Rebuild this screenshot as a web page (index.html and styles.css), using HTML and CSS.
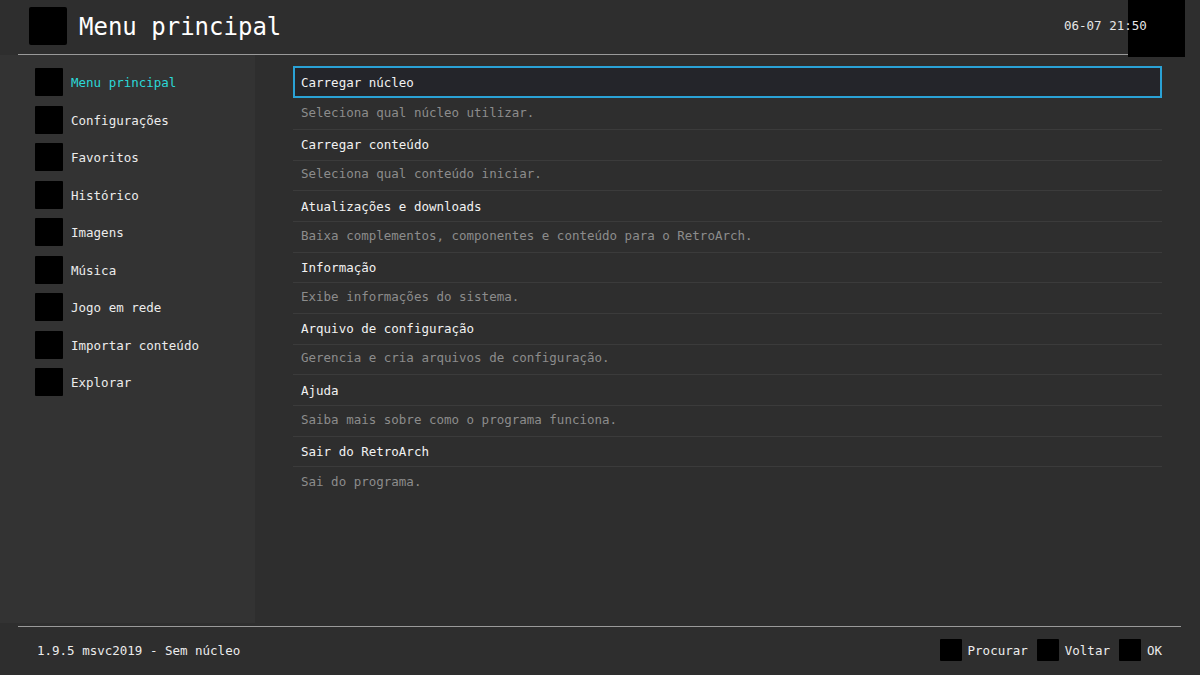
FILE: index.html
```html
<!DOCTYPE html>
<html lang="pt">
<head>
    <meta charset="UTF-8">
    <meta name="viewport" content="width=device-width, initial-scale=1.0">
    <title>Menu principal</title>
    <link rel="stylesheet" href="styles.css">
</head>
<body>
    <div class="screen">
        <header class="header">
            <div class="header-icon"></div>
            <h1 class="title">Menu principal</h1>
            <div class="clock">06-07 21:50</div>
            <div class="status-box"></div>
        </header>

        <div class="body">
            <nav class="sidebar">
                <div class="tab active"><span class="tab-icon"></span>Menu principal</div>
                <div class="tab"><span class="tab-icon"></span>Configurações</div>
                <div class="tab"><span class="tab-icon"></span>Favoritos</div>
                <div class="tab"><span class="tab-icon"></span>Histórico</div>
                <div class="tab"><span class="tab-icon"></span>Imagens</div>
                <div class="tab"><span class="tab-icon"></span>Música</div>
                <div class="tab"><span class="tab-icon"></span>Jogo em rede</div>
                <div class="tab"><span class="tab-icon"></span>Importar conteúdo</div>
                <div class="tab"><span class="tab-icon"></span>Explorar</div>
            </nav>

            <main class="entries">
                <div class="entry selected">
                    <div class="entry-label">Carregar núcleo</div>
                    <div class="entry-desc">Seleciona qual núcleo utilizar.</div>
                </div>
                <div class="entry">
                    <div class="entry-label">Carregar conteúdo</div>
                    <div class="entry-desc">Seleciona qual conteúdo iniciar.</div>
                </div>
                <div class="entry">
                    <div class="entry-label">Atualizações e downloads</div>
                    <div class="entry-desc">Baixa complementos, componentes e conteúdo para o RetroArch.</div>
                </div>
                <div class="entry">
                    <div class="entry-label">Informação</div>
                    <div class="entry-desc">Exibe informações do sistema.</div>
                </div>
                <div class="entry">
                    <div class="entry-label">Arquivo de configuração</div>
                    <div class="entry-desc">Gerencia e cria arquivos de configuração.</div>
                </div>
                <div class="entry">
                    <div class="entry-label">Ajuda</div>
                    <div class="entry-desc">Saiba mais sobre como o programa funciona.</div>
                </div>
                <div class="entry">
                    <div class="entry-label">Sair do RetroArch</div>
                    <div class="entry-desc last">Sai do programa.</div>
                </div>
            </main>
        </div>

        <footer class="footer">
            <div class="version">1.9.5 msvc2019 - Sem núcleo</div>
            <div class="hints">
                <span class="hint-icon"></span><span class="hint">Procurar</span>
                <span class="hint-icon"></span><span class="hint">Voltar</span>
                <span class="hint-icon"></span><span class="hint">OK</span>
            </div>
        </footer>
    </div>
</body>
</html>
```

FILE: styles.css
```css
body {
    margin: 0;
    background-color: #2e2e2e;
    color: #ececec;
    font-family: "DejaVu Sans Mono", "Liberation Mono", monospace;
    font-size: 12.5px;
}
.screen {
    width: 1200px;
    height: 675px;
    display: flex;
    flex-direction: column;
    overflow: hidden;
}

/* header */
.header {
    position: relative;
    height: 54px;
    margin: 0 18px;
    padding-left: 11px;
    display: flex;
    align-items: center;
    border-bottom: 1px solid #9a9a9a;
}
.header-icon {
    width: 38px;
    height: 38px;
    background-color: #000;
    border-radius: 2px;
    margin-top: -2px;
}
.title {
    margin: 0 0 0 12px;
    font-size: 24px;
    font-weight: normal;
    color: #fff;
}
.status-box {
    position: absolute;
    top: 0;
    right: -3px;
    width: 57px;
    height: 57px;
    background-color: #000;
}
.clock {
    position: absolute;
    left: 1046px;
    top: 18px;
    color: #e6e6e6;
    z-index: 1;
}

/* body */
.body {
    flex: 1;
    display: flex;
}
.sidebar {
    width: 255px;
    background-color: #333333;
    padding-top: 13px;
    box-sizing: border-box;
    margin-bottom: 3px;
}
.tab {
    height: 37.5px;
    display: flex;
    align-items: flex-start;
    padding-left: 35px;
    line-height: 30px;
    color: #ececec;
}
.tab-icon {
    width: 28px;
    height: 28px;
    margin-right: 8px;
    background-color: #000;
    border-radius: 1px;
}
.tab.active {
    color: #2bd8d8;
}

.entries {
    width: 869px;
    margin-left: 38px;
    padding-top: 11px;
}
.entry-label,
.entry-desc {
    height: 30.67px;
    box-sizing: border-box;
    padding-left: 8px;
    border-bottom: 1px solid #3b3b3b;
    display: flex;
    align-items: center;
}
.entry-label {
    color: #f2f2f2;
}
.entry-desc {
    color: #8c8c8c;
    padding-bottom: 3px;
}
.entry-desc.last {
    border-bottom: none;
}
.selected .entry-label {
    height: 32px;
    padding-left: 6px;
    border: 2px solid #2aa2d6;
    background-color: #24252a;
}
.selected .entry-desc {
    height: 32px;
}

/* footer */
.footer {
    height: 49px;
    box-sizing: border-box;
    margin: 0 19px 0 18px;
    border-top: 1px solid #9a9a9a;
    display: flex;
    align-items: center;
    justify-content: space-between;
    padding: 0 19px 2px 19px;
}
.version {
    color: #ececec;
}
.hints {
    display: flex;
    align-items: center;
}
.hint-icon {
    width: 22px;
    height: 22px;
    background-color: #000;
    border-radius: 1px;
    margin-right: 6px;
}
.hint {
    margin-right: 9px;
}
.hint:last-child {
    margin-right: 0;
}
```
